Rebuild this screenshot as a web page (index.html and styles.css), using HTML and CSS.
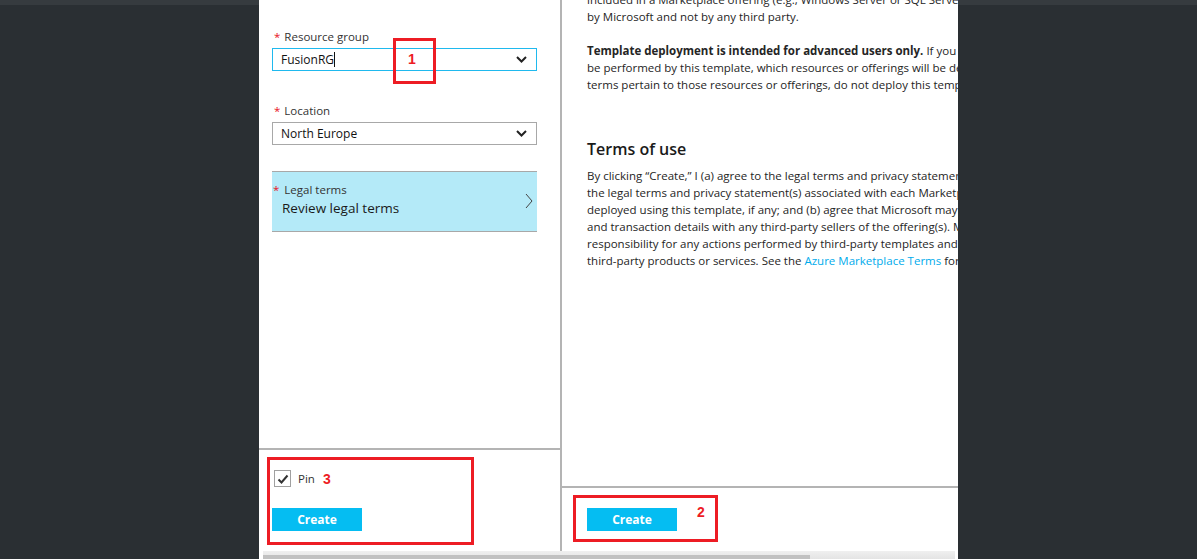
FILE: index.html
```html
<!DOCTYPE html>
<html lang="en">
<head>
    <meta charset="UTF-8">
    <title>Custom deployment</title>
    <link rel="stylesheet" href="styles.css">
</head>
<body>
    <div class="app">
        <div class="gutter"></div>

        <div class="blades">
            <div class="blade-row">
                <!-- parameters blade -->
                <div class="blade blade-left">
                    <div class="blade-content">
                        <div class="field">
                            <div class="field-label"><span class="req">*</span>Resource group</div>
                            <div class="select active">
                                <span>FusionRG<span class="caret"></span></span>
                                <svg class="chevron" width="11" height="7" viewBox="0 0 11 7"><polyline points="1,1 5.5,5.5 10,1" fill="none" stroke="#222" stroke-width="2"/></svg>
                            </div>
                        </div>
                        <div class="field">
                            <div class="field-label"><span class="req">*</span>Location</div>
                            <div class="select">
                                <span>North Europe</span>
                                <svg class="chevron" width="11" height="7" viewBox="0 0 11 7"><polyline points="1,1 5.5,5.5 10,1" fill="none" stroke="#222" stroke-width="2"/></svg>
                            </div>
                        </div>
                        <div class="legal">
                            <div class="legal-text">
                                <div class="legal-label"><span class="req">*</span>Legal terms</div>
                                <div class="legal-value">Review legal terms</div>
                            </div>
                            <svg width="8" height="16" viewBox="0 0 8 16"><polyline points="1,1 7,8 1,15" fill="none" stroke="#444" stroke-width="1"/></svg>
                        </div>
                    </div>
                    <div class="blade-footer">
                        <label class="pin">
                            <span class="checkbox">
                                <svg width="14" height="14" viewBox="0 0 14 14"><polyline points="2.5,7.5 5.5,10.5 11.5,3.5" fill="none" stroke="#333" stroke-width="2"/></svg>
                            </span>
                            Pin
                        </label>
                        <button class="btn">Create</button>
                    </div>
                </div>

                <!-- legal terms blade -->
                <div class="blade blade-right">
                    <div class="blade-content text">
                        <p class="cut">included in a Marketplace offering (e.g., Windows Server or SQL Server), those offerings are provided<br>by Microsoft and not by any third party.</p>
                        <p><b>Template deployment is intended for advanced users only.</b> If you are uncertain which actions will<br>be performed by this template, which resources or offerings will be deployed, and what prices and<br>terms pertain to those resources or offerings, do not deploy this template.</p>
                        <h2>Terms of use</h2>
                        <p>By clicking “Create,” I (a) agree to the legal terms and privacy statement(s) associated with<br>the legal terms and privacy statement(s) associated with each Marketplace offering<br>deployed using this template, if any; and (b) agree that Microsoft may share my contact<br>and transaction details with any third-party sellers of the offering(s). Microsoft assumes no<br>responsibility for any actions performed by third-party templates and does not provide rights for<br>third-party products or services. See the <a href="#">Azure Marketplace Terms</a> for additional terms.</p>
                    </div>
                    <div class="blade-footer short">
                        <button class="btn">Create</button>
                    </div>
                </div>
            </div>

            <div class="hscroll">
                <div class="hscroll-thumb"></div>
            </div>

            <!-- annotations -->
            <div class="mark mark-1"><span>1</span></div>
            <div class="mark mark-2"><span>2</span></div>
            <div class="mark mark-3"><span>3</span></div>
        </div>

        <div class="gutter gutter-right"></div>
    </div>
</body>
</html>
```

FILE: styles.css
```css
* {
    margin: 0;
    padding: 0;
    box-sizing: border-box;
}

body {
    background-color: #2a2f33;
    font-family: 'Open Sans', 'Noto Sans', sans-serif;
    color: #252525;
    font-size: 11.5px;
    overflow: hidden;
}

.app {
    display: flex;
    height: 559px;
}

.gutter {
    width: 259px;
    border-top: 5px solid #363b3f;
}

.gutter-right {
    flex: 1;
}

.blades {
    width: 699px;
    background: white;
    display: flex;
    flex-direction: column;
    position: relative;
}

.blade-row {
    display: flex;
    height: 551px;
}

.blade {
    display: flex;
    flex-direction: column;
    overflow: hidden;
}

.blade-left {
    width: 303px;
    border-right: 2px solid #b4b4b4;
}

.blade-right {
    flex: 1;
}

.blade-content {
    flex: 1;
    padding: 29px 23px 0 13px;
    border-bottom: 2px solid #b4b4b4;
}

.blade-footer {
    height: 101px;
    padding: 20px 0 0 13px;
}

.blade-footer.short {
    height: 63px;
    padding: 20px 0 0 25px;
}

/* form fields */
.field {
    margin-bottom: 32px;
}

.field-label {
    line-height: 16px;
    padding-left: 2px;
    color: #333;
}

.req {
    color: #e81123;
    margin-right: 4px;
}

.select {
    margin-top: 3px;
    height: 23px;
    border: 1px solid #a8a8a8;
    display: flex;
    align-items: center;
    justify-content: space-between;
    padding: 0 9px 0 8px;
    color: #111;
    font-size: 12px;
}

.select.active {
    border-color: #1fb9ee;
}

.caret {
    display: inline-block;
    width: 1px;
    height: 15px;
    background: #111;
    vertical-align: -3px;
}

.legal {
    margin-top: -6px;
    height: 61px;
    background-color: #b4eaf8;
    border-top: 1px solid #a8a8a8;
    border-bottom: 1px solid #a8a8a8;
    display: flex;
    align-items: center;
    justify-content: space-between;
    padding: 0 4px 2px 1px;
}

.legal-label {
    line-height: 16px;
    color: #333;
}

.legal-label .req {
    margin-right: 5px;
}

.legal-value {
    padding-left: 9px;
    font-size: 13.5px;
    line-height: 21px;
    color: #1a1a1a;
}

/* footer */
.pin {
    display: flex;
    align-items: center;
    gap: 7px;
    margin-left: 2px;
    height: 17px;
    color: #333;
}

.checkbox {
    width: 17px;
    height: 17px;
    border: 1px solid #a0a0a0;
    display: flex;
    align-items: center;
    justify-content: center;
}

.btn {
    margin-top: 21px;
    width: 90px;
    height: 23px;
    border: none;
    background-color: #05bdf2;
    color: white;
    font-family: 'Open Sans', 'Noto Sans', sans-serif;
    font-weight: bold;
    font-size: 12px;
}

.blade-footer.short .btn {
    margin-top: 0;
}

/* legal text */
.text {
    padding: 0 0 0 25px;
    white-space: nowrap;
    line-height: 17px;
}

.text p {
    margin-bottom: 17px;
}

.text p.cut {
    margin-top: -9px;
}

.text h2 {
    margin-top: 46px;
    font-size: 16px;
    font-weight: 600;
    line-height: 20px;
    margin-bottom: 8px;
    color: #1a1a1a;
}

.text a {
    color: #00abec;
    text-decoration: none;
}

/* horizontal scrollbar */
.hscroll {
    flex: 1;
    margin-left: 4px;
    margin-right: 3px;
    background: linear-gradient(#f0f0f0, #e4e4e4);
    display: flex;
    align-items: flex-end;
}

.hscroll-thumb {
    width: 547px;
    height: 4px;
    background: #c1c1c1;
}

/* red annotation boxes */
.mark {
    position: absolute;
    border: 3px solid #ed1c24;
}

.mark span {
    position: absolute;
    color: #ed1c24;
    font-family: 'Liberation Sans', sans-serif;
    font-weight: bold;
    font-size: 14px;
    line-height: 14px;
}

.mark-1 {
    left: 134px;
    top: 38px;
    width: 43px;
    height: 46px;
}

.mark-1 span {
    left: 12px;
    top: 11px;
}

.mark-3 {
    left: 8px;
    top: 457px;
    width: 207px;
    height: 88px;
}

.mark-3 span {
    left: 53px;
    top: 12px;
}

.mark-2 {
    left: 314px;
    top: 495px;
    width: 145px;
    height: 47px;
}

.mark-2 span {
    left: 121px;
    top: 7px;
}
```
